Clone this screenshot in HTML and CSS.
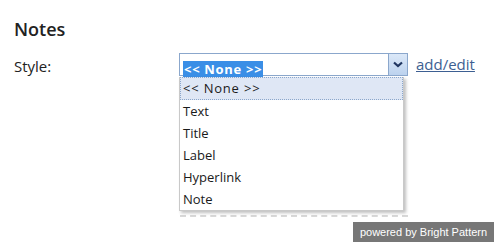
FILE: index.html
```html
<!DOCTYPE html>
<html>
<head>
<meta charset="utf-8">
<link rel="stylesheet" href="styles.css">
</head>
<body>
<div class="page">
  <h1 class="title">Notes</h1>
  <div class="row">
    <span class="label">Style:</span>
    <div class="combo">
      <div class="select">
        <div class="value"><span class="sel">&lt;&lt; None &gt;&gt;</span></div>
        <div class="btn">
          <svg width="10" height="7" viewBox="0 0 10 7"><path d="M1 1.5 L5 5 L9 1.5" fill="none" stroke="#1f3560" stroke-width="2.2"/></svg>
        </div>
      </div>
      <div class="list">
        <div class="item active">&lt;&lt; None &gt;&gt;</div>
        <div class="item">Text</div>
        <div class="item">Title</div>
        <div class="item">Label</div>
        <div class="item">Hyperlink</div>
        <div class="item">Note</div>
      </div>
      <div class="dash"></div>
    </div>
    <a class="link" href="#">add/edit</a>
  </div>
</div>
<div class="badge">powered by Bright Pattern</div>
</body>
</html>
```
FILE: styles.css
```css
html, body {
  margin: 0;
  padding: 0;
  background: #fff;
}
body {
  font-family: "Open Sans", "DejaVu Sans", sans-serif;
  color: #1a1a1a;
  width: 494px;
  height: 242px;
  overflow: hidden;
  position: relative;
}
.page {
  padding: 17px 0 0 14px;
}
.title {
  margin: 0;
  font-size: 18px;
  line-height: 24px;
  font-weight: 600;
  color: #222;
}
.row {
  display: flex;
  align-items: flex-start;
  margin-top: 12px;
}
.label {
  width: 165px;
  font-size: 15px;
  line-height: 23px;
  padding-top: 2px;
  color: #222;
}
.combo {
  position: relative;
  width: 229px;
}
.select {
  display: flex;
  height: 21px;
  border: 1px solid #8ba7cc;
  background: #fff;
}
.value {
  flex: 1;
  padding: 3px 0 0 3px;
}
.sel {
  display: inline-block;
  background: #3a8ee6;
  color: #fff;
  font-weight: bold;
  font-size: 13px;
  line-height: 16px;
  padding: 0 1px;
  letter-spacing: 0.7px;
}
.btn {
  width: 18px;
  border-left: 1px solid #8ba7cc;
  background: linear-gradient(#dbe8f8, #bcd2ee);
  display: flex;
  align-items: center;
  justify-content: center;
}
.list {
  position: absolute;
  left: 0;
  top: 24px;
  width: 223px;
  background: #fff;
  border: 1px solid #c9c9c9;
  border-top: none;
  box-shadow: 2px 2px 3px rgba(0,0,0,0.25);
  z-index: 2;
}
.item {
  height: 22px;
  line-height: 22px;
  font-size: 13px;
  padding-left: 3px;
  color: #1a1a1a;
}
.item.active {
  height: 21px;
  line-height: 21px;
  background: #dfe7f5;
  border: 1px dotted #8ba7cc;
  padding-left: 2px;
  letter-spacing: 0.8px;
}
.dash {
  position: absolute;
  left: 1px;
  top: 162px;
  width: 228px;
  border-top: 2px dashed #d8d8d8;
}
.link {
  margin-left: 8px;
  font-size: 15px;
  line-height: 23px;
  color: #3d5f92;
  text-decoration: underline;
}
.badge {
  position: absolute;
  right: 0;
  bottom: 0;
  width: 141px;
  height: 20px;
  background: #777;
  color: #fff;
  font-family: "Liberation Sans", Arial, sans-serif;
  font-size: 11px;
  line-height: 20px;
  text-align: center;
}
```
